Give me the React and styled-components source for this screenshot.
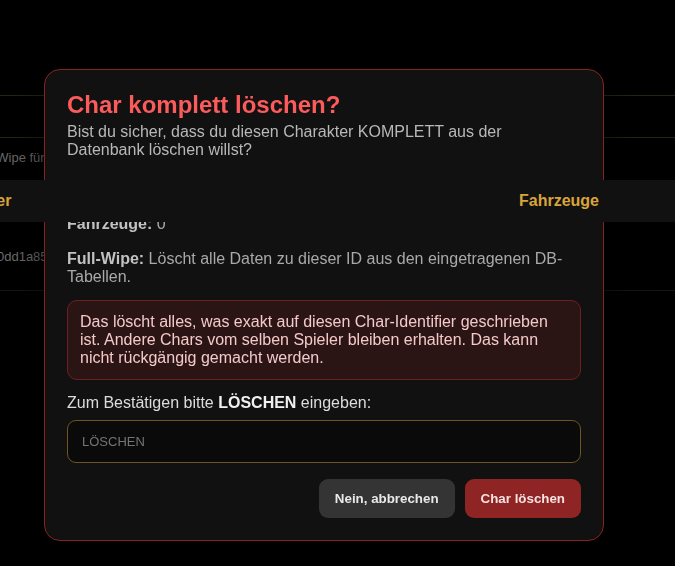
import styled, { createGlobalStyle } from "styled-components";

const Global = createGlobalStyle`
  html, body {
    margin: 0;
    padding: 0;
    background: #000;
    overflow: hidden;
    font-family: "Liberation Sans", Arial, sans-serif;
  }
  * { box-sizing: border-box; }
`;

const Page = styled.div`
  width: 675px;
  height: 566px;
  background: #000;
  overflow: hidden;
`;

const Scroller = styled.div`
  margin-left: -120px;
  width: 795px;
`;

const TopSpace = styled.div`
  height: 95px;
`;

const Toolbar = styled.div`
  height: 43px;
  border-top: 1px solid #28240f;
  border-bottom: 1px solid #28240f;
`;

const Desc = styled.p`
  margin: 0;
  padding: 12px 0 0 91px;
  height: 42px;
  font-size: 13px;
  color: #6c6c6c;
  white-space: nowrap;
`;

const HeadBar = styled.div`
  position: sticky;
  top: 0;
  z-index: 20;
  height: 42px;
  background: #111;
  display: flex;
  align-items: center;
  justify-content: space-between;
  padding: 0 76px 0 78px;
  font-size: 16px;
  font-weight: 700;
  color: #d9a43a;
`;

const Row = styled.div`
  height: 69px;
  display: flex;
  align-items: center;
  padding-left: 70px;
  border-bottom: 1px solid #151515;
  font-size: 13px;
  color: #6f6f6f;
  white-space: nowrap;
`;

const Overlay = styled.div`
  position: fixed;
  inset: 0;
  z-index: 10;
  display: flex;
  align-items: flex-start;
  padding: 69px 0 0 44px;
`;

const Modal = styled.div`
  width: 560px;
  height: 472px;
  display: flex;
  flex-direction: column;
  background: #111;
  border: 1px solid #8a2222;
  border-radius: 16px;
  padding: 21px 22px 22px;
  box-shadow: 0 12px 40px rgba(0, 0, 0, 0.7);
`;

const Title = styled.h2`
  margin: 0 0 4px;
  font-size: 24px;
  font-weight: 700;
  color: #fb5b5b;
`;

const Sub = styled.p`
  margin: 0 0 19px;
  font-size: 16px;
  color: #b8b8b8;
`;

const Body = styled.div`
  flex: 1;
  min-height: 0;
  overflow: hidden;
  display: flex;
  flex-direction: column;
  justify-content: flex-end;
`;

const Info = styled.p`
  margin: 0 0 ${(p) => p.$gap || 17}px;
  font-size: 16px;
  color: #a9a9a9;
  flex-shrink: 0;

  b {
    color: #c2c2c2;
  }
`;

const Warn = styled.div`
  flex-shrink: 0;
  margin-bottom: 14px;
  padding: 12px;
  border: 1px solid #6e2020;
  border-radius: 10px;
  background: #2b1414;
  color: #f3c9c9;
  font-size: 16px;
  line-height: 18px;
`;

const Label = styled.div`
  flex-shrink: 0;
  margin-bottom: 8px;
  font-size: 16px;
  color: #dcdcdc;

  b {
    color: #f0f0f0;
  }
`;

const Input = styled.input`
  flex-shrink: 0;
  width: 100%;
  height: 43px;
  padding: 0 14px;
  border: 1px solid #6d5420;
  border-radius: 9px;
  background: #0a0a0a;
  color: #eee;
  caret-color: #fff;
  font-family: "Liberation Sans", Arial, sans-serif;
  font-size: 13px;
  outline: none;

  &::placeholder {
    color: #747474;
  }
`;

const Footer = styled.div`
  margin-top: 16px;
  display: flex;
  justify-content: flex-end;
  gap: 10px;
`;

const Btn = styled.button`
  height: 39px;
  padding: 0 16px;
  border: none;
  border-radius: 9px;
  font-family: "Liberation Sans", Arial, sans-serif;
  font-size: 13.333px;
  font-weight: 700;
  cursor: pointer;
  background: ${(p) => (p.$danger ? "#8f2424" : "#343434")};
  color: ${(p) => (p.$danger ? "#f7e2e2" : "#e8e8e8")};
`;

export default function App() {
  return (
    <>
      <Global />
      <Page>
        <Scroller>
          <TopSpace />
          <Toolbar />
          <Desc>Full-Wipe für einen Char-Identifier löscht alle Daten aus den DB-Tabellen.</Desc>
          <HeadBar>
            <span>Spieler</span>
            <span>Fahrzeuge</span>
          </HeadBar>
          <Row>char1:9f0dd1a85c2e77b41d</Row>
        </Scroller>
      </Page>
      <Overlay>
        <Modal>
          <Title>Char komplett löschen?</Title>
          <Sub>
            Bist du sicher, dass du diesen Charakter KOMPLETT aus der Datenbank löschen willst?
          </Sub>
          <Body>
            <Info>
              <b>Identifier:</b> char1:9f0dd1a85c2e77b41d
            </Info>
            <Info>
              <b>Items:</b> 12
            </Info>
            <Info>
              <b>Fahrzeuge:</b> 0
            </Info>
            <Info $gap={14}>
              <b>Full-Wipe:</b> Löscht alle Daten zu dieser ID aus den eingetragenen DB-Tabellen.
            </Info>
            <Warn>
              Das löscht alles, was exakt auf diesen Char-Identifier geschrieben ist. Andere Chars
              vom selben Spieler bleiben erhalten. Das kann nicht rückgängig gemacht werden.
            </Warn>
            <Label>
              Zum Bestätigen bitte <b>LÖSCHEN</b> eingeben:
            </Label>
            <Input placeholder="LÖSCHEN" autoFocus />
          </Body>
          <Footer>
            <Btn>Nein, abbrechen</Btn>
            <Btn $danger>Char löschen</Btn>
          </Footer>
        </Modal>
      </Overlay>
    </>
  );
}
